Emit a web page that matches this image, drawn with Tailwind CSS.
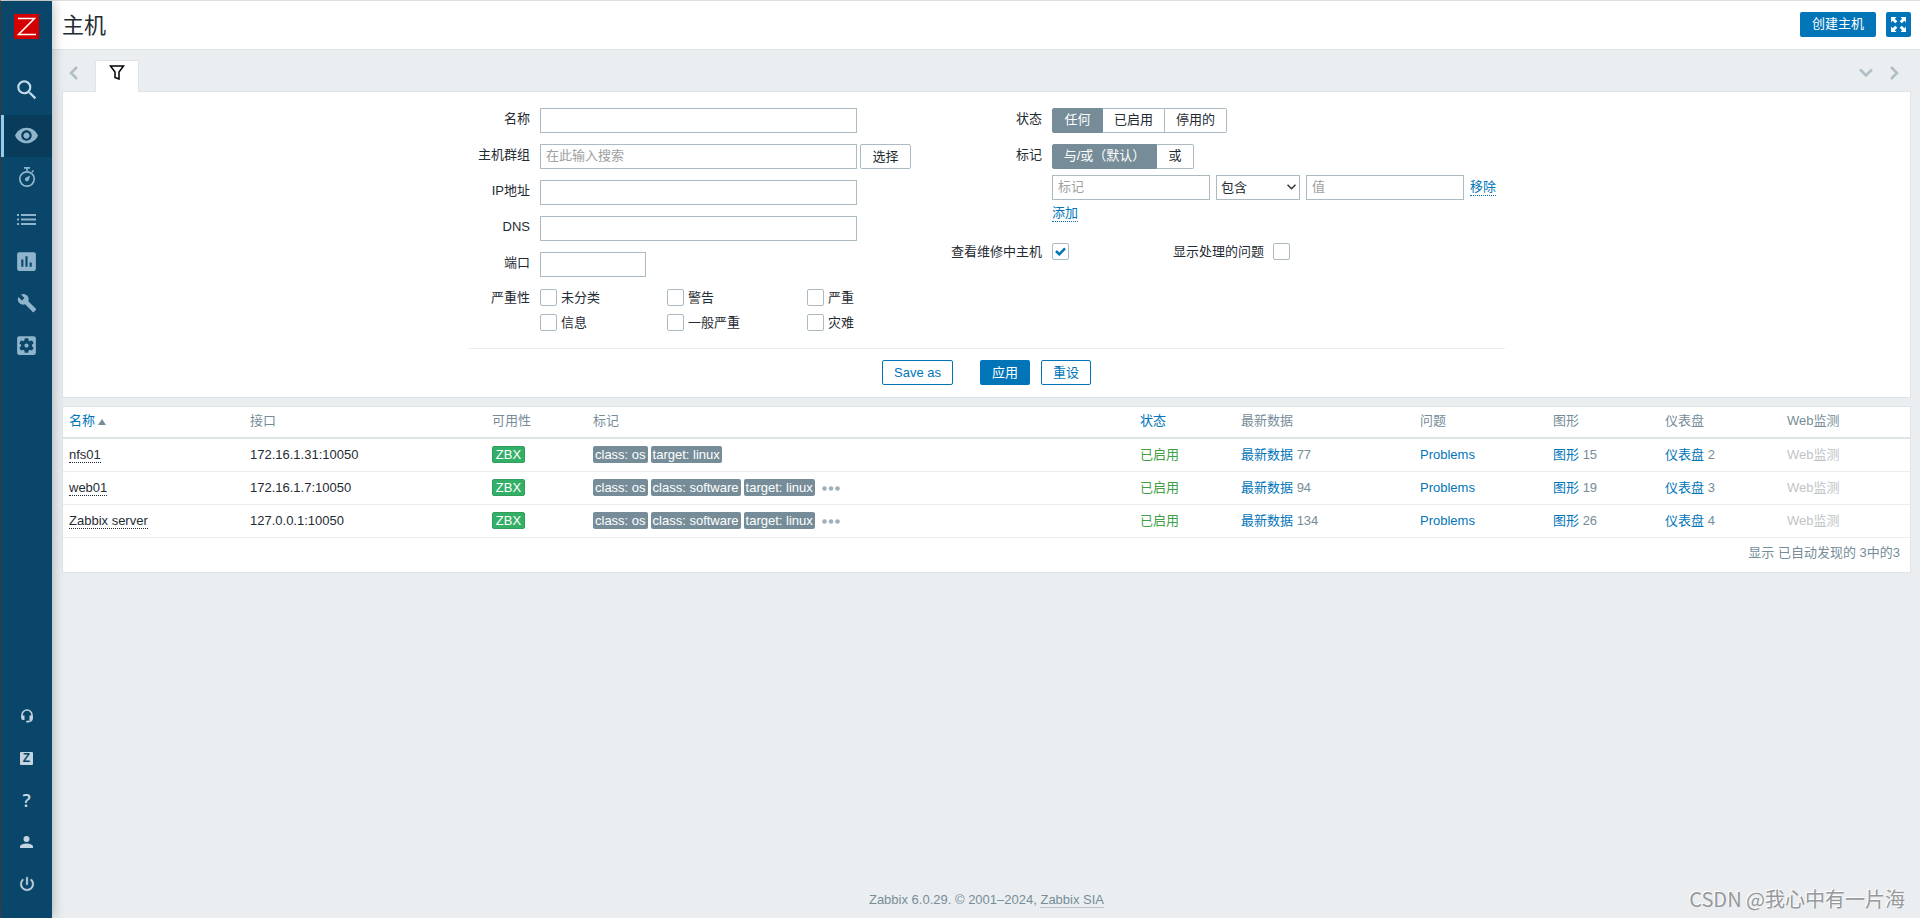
<!DOCTYPE html>
<html lang="zh-CN">
<head>
<meta charset="utf-8">
<title>主机</title>
<script src="https://cdn.jsdelivr.net/npm/@tailwindcss/browser@4"></script>
</head>
<body class="bg-[#ebeef0] font-['Liberation_Sans','Noto_Sans_CJK_SC',sans-serif] text-[13px] leading-[17px] text-[#1f2c33]">
<div class="relative flex min-h-screen border-t border-l border-t-[#dfdfdf] border-l-[#444444]">

  <aside class="z-10 flex w-[51px] shrink-0 flex-col bg-[#0a466a] text-[#8fb4cc] shadow-[0_0_12px_rgba(0,0,0,0.3)]">
    <a href="#" aria-label="Zabbix" class="mt-[13px] flex justify-center">
      <svg class="size-[25px]" viewBox="0 0 25 25"><path fill="#d40000" d="M0 0h25v25H0z"/><path d="M4 4.500h16.500L4.500 20.500H22" fill="none" stroke="#fff" stroke-width="1.500"/></svg>
    </a>
    <button type="button" aria-label="搜索" class="mt-[29px] flex h-[42px] items-center justify-center pt-0.5 text-[#c3dcec]">
      <svg class="size-[26px]" viewBox="0 0 24 24" fill="currentColor"><path d="M15.500 14h-.79l-.28-.27A6.471 6.471 0 0 0 16 9.500 6.500 6.500 0 1 0 9.500 16c1.610 0 3.090-.59 4.230-1.570l.27.28v.79l5 4.990L20.490 19l-4.990-5zm-6 0C7.010 14 5 11.990 5 9.500S7.010 5 9.500 5 14 7.010 14 9.500 11.990 14 9.500 14z"/></svg>
    </button>
    <nav class="mt-[5px] flex flex-col">
      <a href="#" aria-label="监测" class="flex h-[42px] items-center justify-center border-l-3 border-[#87cefa] bg-[#093c5a] pr-[3px] pb-0.5">
        <svg class="size-[25px]" viewBox="0 0 24 24" fill="currentColor"><path d="M12 4.500C7 4.500 2.730 7.610 1 12c1.730 4.390 6 7.500 11 7.500s9.270-3.110 11-7.500c-1.730-4.390-6-7.500-11-7.500zM12 17c-2.760 0-5-2.240-5-5s2.240-5 5-5 5 2.240 5 5-2.240 5-5 5zm0-8c-1.660 0-3 1.340-3 3s1.340 3 3 3 3-1.340 3-3-1.340-3-3-3z"/></svg>
      </a>
      <a href="#" aria-label="服务" class="flex h-[42px] items-center justify-center pb-0.5">
        <svg class="h-5 w-[18px]" viewBox="0 0 18 20" fill="none" stroke="currentColor"><circle cx="9" cy="12" r="7.200" stroke-width="1.700"/><path d="M6 .9h6M9 1v3M14 5l1.500-1.500" stroke-width="1.700"/><path d="M12.200 8.500 10.800 13a2 2 0 1 1-2.600-2.600z" fill="currentColor" stroke="none"/></svg>
      </a>
      <a href="#" aria-label="资产记录" class="flex h-[42px] items-center justify-center pb-0.5">
        <svg class="h-[11px] w-[19px]" viewBox="0 0 19 11" fill="currentColor"><path d="M0 0h2v2H0zM4 0h15v2H4zM0 4.500h2v2H0zM4 4.500h15v2H4zM0 9h2v2H0zM4 9h15v2H4z"/></svg>
      </a>
      <a href="#" aria-label="报表" class="flex h-[42px] items-center justify-center pb-0.5">
        <svg class="size-[25px]" viewBox="0 0 24 24" fill="currentColor"><path d="M19 3H5c-1.100 0-2 .9-2 2v14c0 1.100.9 2 2 2h14c1.100 0 2-.9 2-2V5c0-1.100-.9-2-2-2zM9 17H7v-7h2v7zm4 0h-2V7h2v10zm4 0h-2v-4h2v4z"/></svg>
      </a>
      <a href="#" aria-label="配置" class="flex h-[42px] items-center justify-center pb-0.5">
        <svg class="size-5" viewBox="0 0 24 24" fill="currentColor"><path d="M22.700 19l-9.100-9.100c.9-2.300.4-5-1.500-6.900-2-2-5-2.400-7.400-1.300L9 6 6 9 1.600 4.700C.4 7.100.9 10.100 2.900 12.100c1.900 1.900 4.600 2.400 6.900 1.500l9.100 9.100c.4.4 1 .4 1.400 0l2.300-2.300c.5-.4.5-1.100.1-1.400z"/></svg>
      </a>
      <a href="#" aria-label="管理" class="flex h-[42px] items-center justify-center pb-0.5">
        <svg class="size-[25px]" viewBox="0 0 24 24" fill="currentColor"><path d="M12 10c-1.100 0-2 .9-2 2s.9 2 2 2 2-.9 2-2-.9-2-2-2zm7-7H5c-1.110 0-2 .9-2 2v14c0 1.100.89 2 2 2h14c1.110 0 2-.9 2-2V5c0-1.100-.89-2-2-2zm-1.750 9c0 .23-.02.46-.05.68l1.480 1.160c.13.11.17.3.08.45l-1.400 2.420c-.09.15-.27.21-.43.15l-1.740-.7c-.36.28-.76.51-1.180.69l-.26 1.850c-.03.17-.18.3-.35.3h-2.800c-.17 0-.32-.13-.35-.29l-.26-1.850c-.43-.18-.82-.41-1.180-.69l-1.740.7c-.16.06-.34 0-.43-.15l-1.400-2.420c-.09-.15-.05-.34.08-.45l1.480-1.160c-.03-.23-.05-.46-.05-.69 0-.23.02-.46.05-.68l-1.480-1.160c-.13-.11-.17-.3-.08-.45l1.400-2.420c.09-.15.27-.21.43-.15l1.740.7c.36-.28.76-.51 1.180-.69l.26-1.850c.03-.17.18-.3.35-.3h2.800c.17 0 .32.13.35.29l.26 1.850c.43.18.82.41 1.180.69l1.740-.7c.16-.06.34 0 .43.15l1.400 2.420c.09.15.05.34-.08.45l-1.480 1.160c.03.23.05.46.05.69z"/></svg>
      </a>
    </nav>
    <nav class="mt-auto flex flex-col pb-[13px] text-[#c5d5df]">
      <a href="#" aria-label="支持" class="flex h-[42px] items-center justify-center">
        <svg class="size-[14px]" viewBox="0 0 14 14" fill="none" stroke="currentColor"><path d="M2 8V6a5 5 0 0 1 10 0v3.500c0 2-1.500 3-4 3" stroke-width="1.500"/><path d="M1.200 6.500H4.500V11H3A1.800 1.800 0 0 1 1.200 9.200zM9.500 6.500h3.300v2.700A1.800 1.800 0 0 1 11 11H9.500zM6.300 11.700h2.500v1.800H6.300z" fill="currentColor" stroke="none"/></svg>
      </a>
      <a href="#" aria-label="Share" class="flex h-[42px] items-center justify-center">
        <span class="flex size-[13px] items-center justify-center rounded-[1px] bg-[#c5d5df] text-xs leading-none font-bold text-[#0a466a]">Z</span>
      </a>
      <a href="#" aria-label="帮助" class="flex h-[42px] items-center justify-center font-['Open_Sans',sans-serif] text-lg font-semibold">?</a>
      <a href="#" aria-label="用户" class="flex h-[42px] items-center justify-center">
        <svg class="h-3 w-[13px]" viewBox="0 0 13 12" fill="currentColor"><circle cx="6.500" cy="3" r="3"/><path d="M0 12v-1.500C0 8.500 4 7.500 6.500 7.500S13 8.500 13 10.500V12z"/></svg>
      </a>
      <a href="#" aria-label="退出" class="flex h-[42px] items-center justify-center">
        <svg class="size-[18px]" viewBox="0 0 24 24" fill="currentColor"><path d="M13 3h-2v10h2V3zm4.830 2.170l-1.420 1.420A6.920 6.920 0 0 1 19 12c0 3.870-3.130 7-7 7s-7-3.130-7-7c0-2.190 1.010-4.140 2.580-5.420L6.170 5.170A8.932 8.932 0 0 0 3 12a9 9 0 0 0 18 0c0-2.740-1.230-5.180-3.170-6.830z" stroke="currentColor" stroke-width=".6"/></svg>
      </a>
    </nav>
  </aside>

  <div class="flex min-w-0 grow flex-col">
    <header class="flex items-start justify-between border-b border-[#dfe4e7] bg-white pr-[9px] pl-[10px]">
      <h1 class="pt-0.5 text-[22px] leading-[46px]">主机</h1>
      <div class="flex gap-[10px] pt-[11px]">
        <button type="button" class="h-[25px] w-[76px] rounded-[2px] bg-[#0275b8] pb-0.5 text-white">创建主机</button>
        <button type="button" aria-label="全屏" class="flex size-[25px] items-center justify-center rounded-[2px] bg-[#0275b8] text-white">
          <svg class="size-[15px]" viewBox="0 0 15 15" fill="currentColor"><path d="M0 0h5.500L3.800 1.700 6.300 4.200 4.200 6.300 1.700 3.800 0 5.500zM15 0v5.500l-1.700-1.700-2.500 2.500-2.100-2.100 2.500-2.500L9.500 0zM0 15V9.500l1.700 1.700 2.500-2.500 2.100 2.100-2.500 2.500L5.500 15zM15 15H9.500l1.700-1.700-2.500-2.500 2.100-2.100 2.500 2.500L15 9.500z"/></svg>
        </button>
      </div>
    </header>

    <main class="flex grow flex-col pr-[9px] pl-[10px]">
      <div class="flex h-[41px] items-end text-[#b0bfc6]">
        <button type="button" aria-label="上一个" class="flex h-[37px] w-[33px] items-center pl-[7px]">
          <svg class="h-[14px] w-[9px]" viewBox="0 0 9 14" fill="none" stroke="currentColor" stroke-width="2.500"><path d="M8 1 2 7l6 6"/></svg>
        </button>
        <button type="button" aria-label="过滤器" class="z-1 -mb-px flex h-8 w-[44px] justify-center rounded-t-[2px] border border-b-0 border-[#dfe4e7] bg-white pt-1 text-black">
          <svg class="h-[15px] w-4" viewBox="0 0 16 15" fill="none" stroke="currentColor" stroke-width="1.500"><path d="M1.500 1h13L10 7v7l-4-1.500V7z"/></svg>
        </button>
        <div class="ml-auto flex h-[37px] items-center gap-[17px] pr-3">
          <button type="button" aria-label="展开">
            <svg class="h-[9px] w-[14px]" viewBox="0 0 14 9" fill="none" stroke="currentColor" stroke-width="2.500"><path d="m1 1.500 6 6 6-6"/></svg>
          </button>
          <button type="button" aria-label="下一个">
            <svg class="h-[14px] w-[9px]" viewBox="0 0 9 14" fill="none" stroke="currentColor" stroke-width="2.500"><path d="m1 1 6 6-6 6"/></svg>
          </button>
        </div>
      </div>

      <form class="flex flex-col items-center border border-[#dfe4e7] bg-white pt-4 pb-3">
        <div class="flex w-full max-w-[1037px] border-b border-[#ebeef0] pb-[17px]">
          <div class="grid w-[472px] grid-cols-[62px_1fr] content-start gap-x-[10px] gap-y-[11px]">
            <label for="name" class="text-right leading-[21px]">名称</label>
            <input id="name" type="text" class="h-[25px] w-[317px] border border-[#acbbc2] px-[5px]">
            <label for="groups" class="text-right leading-[21px] whitespace-nowrap">主机群组</label>
            <div class="flex gap-[3px]">
              <input id="groups" type="text" placeholder="在此输入搜索" class="h-[25px] w-[317px] border border-[#acbbc2] px-[5px] pb-0.5 placeholder:text-[#a0a0a0]">
              <button type="button" class="h-[25px] w-[51px] rounded-[2px] border border-[#acbbc2]">选择</button>
            </div>
            <label for="ip" class="text-right leading-[21px]">IP地址</label>
            <input id="ip" type="text" class="h-[25px] w-[317px] border border-[#acbbc2] px-[5px]">
            <label for="dns" class="text-right leading-[21px]">DNS</label>
            <input id="dns" type="text" class="h-[25px] w-[317px] border border-[#acbbc2] px-[5px]">
            <label for="port" class="text-right leading-[21px]">端口</label>
            <input id="port" type="text" class="h-[25px] w-[106px] border border-[#acbbc2] px-[5px]">
            <span class="pt-px text-right">严重性</span>
            <div class="grid grid-cols-[127px_140px_1fr] gap-y-2 pt-px">
              <label class="flex items-center gap-1"><input type="checkbox" class="size-[17px] appearance-none rounded-[2px] border border-[#acbbc2]">未分类</label>
              <label class="flex items-center gap-1"><input type="checkbox" class="size-[17px] appearance-none rounded-[2px] border border-[#acbbc2]">警告</label>
              <label class="flex items-center gap-1"><input type="checkbox" class="size-[17px] appearance-none rounded-[2px] border border-[#acbbc2]">严重</label>
              <label class="flex items-center gap-1"><input type="checkbox" class="size-[17px] appearance-none rounded-[2px] border border-[#acbbc2]">信息</label>
              <label class="flex items-center gap-1"><input type="checkbox" class="size-[17px] appearance-none rounded-[2px] border border-[#acbbc2]">一般严重</label>
              <label class="flex items-center gap-1"><input type="checkbox" class="size-[17px] appearance-none rounded-[2px] border border-[#acbbc2]">灾难</label>
            </div>
          </div>

          <div class="grid grow grid-cols-[102px_1fr] content-start gap-x-[10px] gap-y-[11px]">
            <span class="text-right leading-[21px]">状态</span>
            <div class="flex text-center leading-[21px]">
              <label class="relative w-[51px] rounded-l-[2px] border border-[#768d99] bg-[#768d99] pb-0.5 text-white"><input type="radio" name="status" checked class="sr-only">任何</label>
              <label class="relative w-[62px] border-y border-r border-[#acbbc2] pb-0.5"><input type="radio" name="status" class="sr-only">已启用</label>
              <label class="relative w-[62px] rounded-r-[2px] border-y border-r border-[#acbbc2] pb-0.5"><input type="radio" name="status" class="sr-only">停用的</label>
            </div>
            <span class="text-right leading-[21px]">标记</span>
            <div class="flex flex-col items-start">
              <div class="flex text-center leading-[21px]">
                <label class="relative w-[105px] rounded-l-[2px] border border-[#768d99] bg-[#768d99] pb-0.5 whitespace-nowrap text-white"><input type="radio" name="evaltype" checked class="sr-only">与/或（默认）</label>
                <label class="relative w-[37px] rounded-r-[2px] border-y border-r border-[#acbbc2] pb-0.5"><input type="radio" name="evaltype" class="sr-only">或</label>
              </div>
              <div class="mt-[6px] flex items-center gap-[6px]">
                <input type="text" aria-label="标记" placeholder="标记" class="h-[25px] w-[158px] border border-[#acbbc2] px-[5px] pb-0.5 placeholder:text-[#a0a0a0]">
                <div class="relative">
                  <select aria-label="运算符" class="block h-[25px] w-[84px] appearance-none border border-[#acbbc2] bg-white pl-1"><option>包含</option></select>
                  <svg class="pointer-events-none absolute top-[9px] right-1 h-[6px] w-[9px]" viewBox="0 0 9 6" fill="none" stroke="#333" stroke-width="1.500"><path d="m.5.7 4 4 4-4"/></svg>
                </div>
                <input type="text" aria-label="值" placeholder="值" class="h-[25px] w-[158px] border border-[#acbbc2] px-[5px] pb-0.5 placeholder:text-[#a0a0a0]">
                <a href="#" class="border-b border-dotted border-[#0275b8] leading-4 whitespace-nowrap text-[#0275b8]">移除</a>
              </div>
              <a href="#" class="mt-[5px] border-b border-dotted border-[#0275b8] leading-4 text-[#0275b8]">添加</a>
            </div>
            <label for="maintenance" class="mt-[10px] text-right">查看维修中主机</label>
            <div class="mt-[10px] flex items-center">
              <div class="relative flex">
                <input id="maintenance" type="checkbox" checked class="size-[17px] appearance-none rounded-[2px] border border-[#acbbc2]">
                <svg class="pointer-events-none absolute top-1 left-[3px] h-[9px] w-[11px]" viewBox="0 0 11 9" fill="none" stroke="#0275b8" stroke-width="2.500"><path d="m1 4 3.300 3.300L10 1.300"/></svg>
              </div>
              <label for="suppressed" class="ml-[104px]">显示处理的问题</label>
              <input id="suppressed" type="checkbox" class="ml-[9px] size-[17px] appearance-none rounded-[2px] border border-[#acbbc2]">
            </div>
          </div>
        </div>
        <div class="mt-[11px] flex text-[#0275b8]">
          <button type="button" class="h-[25px] w-[71px] rounded-[2px] border border-[#0275b8]">Save as</button>
          <button type="submit" class="ml-[27px] h-[25px] w-[50px] rounded-[2px] bg-[#0275b8] text-white">应用</button>
          <button type="reset" class="ml-[11px] h-[25px] w-[50px] rounded-[2px] border border-[#0275b8]">重设</button>
        </div>
      </form>

      <section class="mt-2 border border-[#dfe4e7] bg-white text-[#768d99]">
        <table class="w-full table-fixed border-collapse text-left [&_td]:px-[6px] [&_td]:pb-px [&_th]:px-[6px] [&_th]:font-normal">
          <colgroup>
            <col class="w-[181px]"><col class="w-[242px]"><col class="w-[101px]"><col><col class="w-[101px]"><col class="w-[179px]"><col class="w-[133px]"><col class="w-[112px]"><col class="w-[122px]"><col class="w-[129px]">
          </colgroup>
          <thead>
            <tr class="h-[31px] border-b-2 border-[#dfe4e7] [&>th]:pb-1">
              <th scope="col"><a href="#" class="flex items-center gap-[3px] text-[#0275b8]">名称<svg class="mt-1 h-[6px] w-2" viewBox="0 0 8 6"><path fill="#768d99" d="M4 0 8 6H0z"/></svg></a></th>
              <th scope="col">接口</th><th scope="col">可用性</th><th scope="col">标记</th>
              <th scope="col"><a href="#" class="text-[#0275b8]">状态</a></th>
              <th scope="col">最新数据</th><th scope="col">问题</th><th scope="col">图形</th><th scope="col">仪表盘</th><th scope="col">Web监测</th>
            </tr>
          </thead>
          <tbody>
            <tr class="h-[33px] border-b border-[#ebeef0]">
              <td><a href="#" class="border-b border-dotted border-[#1f2c33] text-[#1f2c33]">nfs01</a></td>
              <td class="text-[#1f2c33]">172.16.1.31:10050</td>
              <td><button type="button" class="block h-[17px] w-[33px] rounded-[2px] border border-[#2f9f5e] bg-[#34af67] leading-[15px] text-white">ZBX</button></td>
              <td><div class="flex gap-[3px] text-white"><span class="rounded-[2px] bg-[#768d99] px-0.5">class: os</span><span class="rounded-[2px] bg-[#768d99] px-0.5">target: linux</span></div></td>
              <td><a href="#" class="text-[#429e47]">已启用</a></td>
              <td><a href="#" class="text-[#0275b8]">最新数据</a> 77</td>
              <td><a href="#" class="text-[#0275b8]">Problems</a></td>
              <td><a href="#" class="text-[#0275b8]">图形</a> 15</td>
              <td><a href="#" class="text-[#0275b8]">仪表盘</a> 2</td>
              <td class="text-[#c0c4c7]">Web监测</td>
            </tr>
            <tr class="h-[33px] border-b border-[#ebeef0]">
              <td><a href="#" class="border-b border-dotted border-[#1f2c33] text-[#1f2c33]">web01</a></td>
              <td class="text-[#1f2c33]">172.16.1.7:10050</td>
              <td><button type="button" class="block h-[17px] w-[33px] rounded-[2px] border border-[#2f9f5e] bg-[#34af67] leading-[15px] text-white">ZBX</button></td>
              <td><div class="flex gap-[3px] text-white"><span class="rounded-[2px] bg-[#768d99] px-0.5">class: os</span><span class="rounded-[2px] bg-[#768d99] px-0.5">class: software</span><span class="rounded-[2px] bg-[#768d99] px-0.5">target: linux</span><button type="button" aria-label="更多标记" class="ml-1 pt-[3px] text-[#9fb0ba]"><svg class="h-[5px] w-[18px]" viewBox="0 0 18 5" fill="currentColor"><circle cx="2.500" cy="2.500" r="2.300"/><circle cx="9" cy="2.500" r="2.300"/><circle cx="15.500" cy="2.500" r="2.300"/></svg></button></div></td>
              <td><a href="#" class="text-[#429e47]">已启用</a></td>
              <td><a href="#" class="text-[#0275b8]">最新数据</a> 94</td>
              <td><a href="#" class="text-[#0275b8]">Problems</a></td>
              <td><a href="#" class="text-[#0275b8]">图形</a> 19</td>
              <td><a href="#" class="text-[#0275b8]">仪表盘</a> 3</td>
              <td class="text-[#c0c4c7]">Web监测</td>
            </tr>
            <tr class="h-[33px] border-b border-[#ebeef0]">
              <td><a href="#" class="border-b border-dotted border-[#1f2c33] text-[#1f2c33]">Zabbix server</a></td>
              <td class="text-[#1f2c33]">127.0.0.1:10050</td>
              <td><button type="button" class="block h-[17px] w-[33px] rounded-[2px] border border-[#2f9f5e] bg-[#34af67] leading-[15px] text-white">ZBX</button></td>
              <td><div class="flex gap-[3px] text-white"><span class="rounded-[2px] bg-[#768d99] px-0.5">class: os</span><span class="rounded-[2px] bg-[#768d99] px-0.5">class: software</span><span class="rounded-[2px] bg-[#768d99] px-0.5">target: linux</span><button type="button" aria-label="更多标记" class="ml-1 pt-[3px] text-[#9fb0ba]"><svg class="h-[5px] w-[18px]" viewBox="0 0 18 5" fill="currentColor"><circle cx="2.500" cy="2.500" r="2.300"/><circle cx="9" cy="2.500" r="2.300"/><circle cx="15.500" cy="2.500" r="2.300"/></svg></button></div></td>
              <td><a href="#" class="text-[#429e47]">已启用</a></td>
              <td><a href="#" class="text-[#0275b8]">最新数据</a> 134</td>
              <td><a href="#" class="text-[#0275b8]">Problems</a></td>
              <td><a href="#" class="text-[#0275b8]">图形</a> 26</td>
              <td><a href="#" class="text-[#0275b8]">仪表盘</a> 4</td>
              <td class="text-[#c0c4c7]">Web监测</td>
            </tr>
          </tbody>
        </table>
        <p class="pt-[6px] pr-[10px] pb-[11px] text-right">显示 已自动发现的 3中的3</p>
      </section>

      <footer class="mt-auto pb-[10px] text-center text-[#768d99]">Zabbix 6.0.29. © 2001–2024, <a href="#" class="border-b border-[#b9c4ca]">Zabbix SIA</a></footer>
    </main>
  </div>

  <p class="pointer-events-none absolute right-[15px] bottom-[7px] font-['Noto_Sans_CJK_SC',sans-serif] text-xl leading-6 text-[#96999b] [text-shadow:-1px_-1px_0_#ffffff]">CSDN @我心中有一片海</p>
</div>
</body>
</html>
